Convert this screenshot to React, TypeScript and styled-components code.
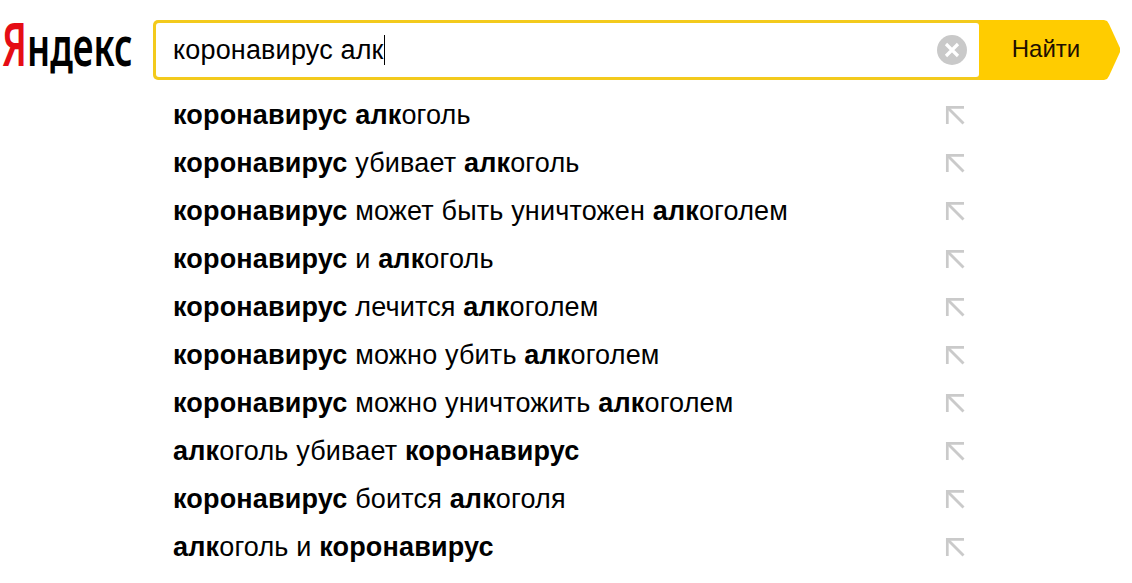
import styled, { createGlobalStyle } from 'styled-components';

type Part = { text: string; match?: boolean };

const QUERY = 'коронавирус алк';

const SUGGESTIONS = [
  '*коронавирус алк*оголь',
  '*коронавирус* убивает *алк*оголь',
  '*коронавирус* может быть уничтожен *алк*оголем',
  '*коронавирус* и *алк*оголь',
  '*коронавирус* лечится *алк*оголем',
  '*коронавирус* можно убить *алк*оголем',
  '*коронавирус* можно уничтожить *алк*оголем',
  '*алк*оголь убивает *коронавирус*',
  '*коронавирус* боится *алк*оголя',
  '*алк*оголь и *коронавирус*',
];

// every second chunk between asterisks is the matched part
const parse = (value: string): Part[] =>
  value
    .split('*')
    .map((text, i) => ({ text, match: i % 2 === 1 }))
    .filter(({ text }) => text !== '');

const Logo = () => (
  <LogoSvg viewBox='0 0 153 80' role='img' aria-label='Яндекс'>
    <LogoText x='2' y='66' fontSize='59' textLength='25' lengthAdjust='spacingAndGlyphs' fill='#e50d15'>
      Я
    </LogoText>
    <LogoText x='27' y='66' fontSize='55' textLength='105.5' lengthAdjust='spacingAndGlyphs' fill='#000'>
      ндекс
    </LogoText>
  </LogoSvg>
);

const App = () => {
  return (
    <>
      <GlobalStyle />
      <Page>
        <Header>
          <Logo />
          <Search.Form>
            <Search.Field>
              <Search.Query>{QUERY}</Search.Query>
              <Search.Caret />
              <Search.Clear type='button' aria-label='Очистить'>
                <svg width='30' height='30' viewBox='0 0 30 30'>
                  <circle cx='15' cy='15' r='15' fill='#c9c9c9' />
                  <path d='M9 9l12 12M21 9L9 21' stroke='#fff' strokeWidth='3.2' />
                </svg>
              </Search.Clear>
            </Search.Field>
            <Search.Submit type='button'>Найти</Search.Submit>
          </Search.Form>
        </Header>
        <Suggest.List>
          {SUGGESTIONS.map((item) => (
            <Suggest.Row key={item}>
              <Suggest.Text>
                {parse(item).map(({ text, match }) => (
                  <Suggest.Part key={text} $match={match}>
                    {text}
                  </Suggest.Part>
                ))}
              </Suggest.Text>
              <svg width='20' height='20' viewBox='0 0 20 20' fill='none' stroke='#cacaca'>
                <path d='M2.3 19V2.4H19' strokeWidth='2.7' />
                <path d='M2.5 2.5L18.5 18.5' strokeWidth='2.8' />
              </svg>
            </Suggest.Row>
          ))}
        </Suggest.List>
      </Page>
    </>
  );
};

const GlobalStyle = createGlobalStyle`
  * {
    box-sizing: border-box;
  }
  body {
    margin: 0;
    background: #fff;
    font-family: 'Liberation Sans', Arial, sans-serif;
    color: #000;
  }
`;

const Page = styled.main`
  width: 1132px;
  height: 583px;
  overflow: hidden;
`;

const Header = styled.header`
  display: flex;
  height: 80px;
`;

const LogoSvg = styled.svg`
  width: 153px;
  height: 80px;
  flex: none;
  overflow: visible;
`;

const LogoText = styled.text`
  font-family: 'Noto Sans', 'Open Sans', sans-serif;
  font-weight: 600;
`;

const Search = {
  Form: styled.form`
    display: flex;
    width: 968px;
    height: 60px;
    margin-top: 20px;
    border-radius: 5px 0 0 5px;
    background: linear-gradient(to right, #f3ca1c 826px, #fc0 826px);
    clip-path: polygon(0 0, 951px 0, 954px 1px, 956px 4px, 967px 28px, 967px 32px, 956px 56px, 954px 59px, 951px 100%, 0 100%);
  `,
  Field: styled.div`
    display: flex;
    align-items: center;
    width: 823px;
    margin: 3px 0 3px 3px;
    padding: 0 12px 0 17px;
    border-radius: 3px;
    background: #fff;
  `,
  Query: styled.span`
    font-size: 27px;
    line-height: 32px;
    letter-spacing: 0.17px;
    white-space: pre;
  `,
  Caret: styled.span`
    width: 1px;
    height: 30px;
    background: #000;
  `,
  Clear: styled.button`
    display: flex;
    margin-left: auto;
    padding: 0;
    border: 0;
    background: none;
  `,
  Submit: styled.button`
    flex: 1;
    padding: 0 8px 2px 0;
    border: 0;
    background: none;
    color: #210f00;
    font-family: inherit;
    font-size: 24px;
  `,
};

const Suggest = {
  List: styled.ul`
    margin: 0;
    padding: 11px 0 0;
    list-style: none;
  `,
  Row: styled.li`
    display: flex;
    align-items: center;
    justify-content: space-between;
    height: 48px;
    padding: 0 167px 0 173px;
  `,
  Text: styled.span`
    font-size: 27px;
    line-height: 32px;
    letter-spacing: 0.17px;
    white-space: pre;
  `,
  Part: styled.span<{ $match?: boolean }>`
    font-weight: ${({ $match }) => ($match ? 700 : 400)};
  `,
};

export default App;
